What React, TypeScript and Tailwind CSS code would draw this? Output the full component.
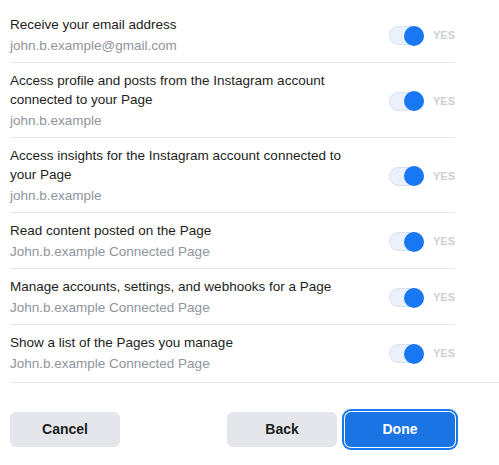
import React from "react";

const rows = [
  { title: "Receive your email address", sub: "john.b.example@gmail.com" },
  { title: "Access profile and posts from the Instagram account connected to your Page", sub: "john.b.example" },
  { title: "Access insights for the Instagram account connected to your Page", sub: "john.b.example" },
  { title: "Read content posted on the Page", sub: "John.b.example Connected Page" },
  { title: "Manage accounts, settings, and webhooks for a Page", sub: "John.b.example Connected Page" },
  { title: "Show a list of the Pages you manage", sub: "John.b.example Connected Page" },
];

function Toggle() {
  return (
    <div className="flex items-center shrink-0">
      <div className="relative w-[35px] h-[19px] rounded-full bg-[#eaf1fc] border border-[#d8e1ef]">
        <div className="absolute right-[-1px] top-1/2 -translate-y-1/2 w-[20px] h-[20px] rounded-full bg-[#1877f2]" />
      </div>
      <span className="ml-[9px] text-[11px] font-bold text-[#ccd0d5] leading-none">YES</span>
    </div>
  );
}

export default function App() {
  return (
    <div
      className="w-[499px] h-[465px] bg-white pl-[10px] pt-[7px] overflow-hidden"
      style={{ fontFamily: '"Liberation Sans", Arial, sans-serif' }}
    >
      <div className="w-[445px]">
        {rows.map((r, i) => (
          <div
            key={i}
            className={`flex items-center pt-2 pb-[6px] ${i < rows.length - 1 ? "border-b border-[#e4e6eb]" : ""}`}
          >
            <div className="flex-1 pr-[26px]">
              <div className="text-[13.5px] leading-[19px] text-[#1c1e21]">{r.title}</div>
              <div className="mt-[2px] text-[13.5px] leading-[20px] text-[#90949c]">{r.sub}</div>
            </div>
            <Toggle />
          </div>
        ))}
      </div>
      <div className="mt-[2px] border-t border-[#e4e6eb]">
        <div className="w-[445px] flex items-center justify-between pt-[29px]">
          <button className="w-[110px] h-[35px] rounded-[6px] bg-[#e4e6eb] text-[14px] font-bold text-[#1c1e21]">
            Cancel
          </button>
          <div className="flex items-center gap-[8px]">
            <button className="w-[110px] h-[35px] rounded-[6px] bg-[#e4e6eb] text-[14px] font-bold text-[#1c1e21]">
              Back
            </button>
            <button className="w-[110px] h-[35px] rounded-[6px] bg-[#1b74e4] text-[14px] font-bold text-white ring-2 ring-[#1877f2] ring-offset-1 ring-offset-white">
              Done
            </button>
          </div>
        </div>
      </div>
    </div>
  );
}
